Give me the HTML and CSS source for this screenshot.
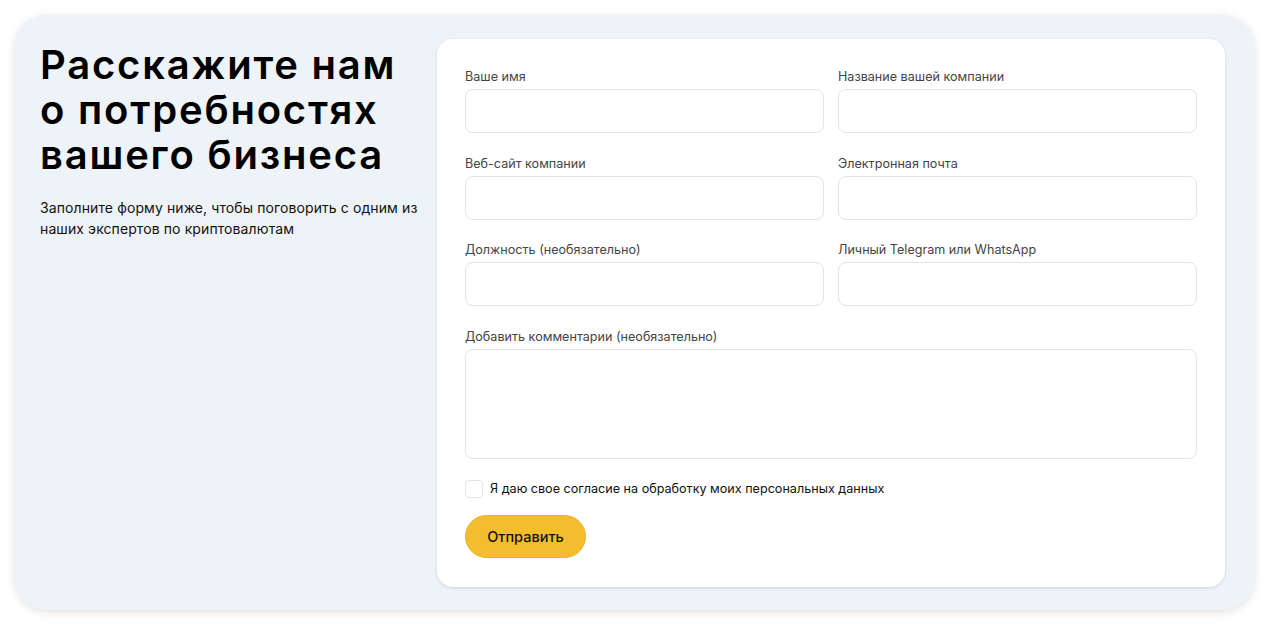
FILE: index.html
```html
<!DOCTYPE html>
<html lang="ru">
<head>
    <meta charset="UTF-8">
    <title>Связаться с нами</title>
    <link rel="stylesheet" href="styles.css">
</head>
<body>
    <section class="contact">
        <div class="contact-intro">
            <h1 class="contact-title">Расскажите нам о&nbsp;потребностях вашего бизнеса</h1>
            <p class="contact-text">Заполните форму ниже, чтобы поговорить с одним из наших экспертов по криптовалютам</p>
        </div>

        <form class="contact-card">
            <div class="form-grid">
                <label class="field">
                    <span class="field-label">Ваше имя</span>
                    <input type="text" class="field-input">
                </label>
                <label class="field">
                    <span class="field-label">Название вашей компании</span>
                    <input type="text" class="field-input">
                </label>
                <label class="field">
                    <span class="field-label">Веб-сайт компании</span>
                    <input type="text" class="field-input">
                </label>
                <label class="field">
                    <span class="field-label">Электронная почта</span>
                    <input type="email" class="field-input">
                </label>
                <label class="field">
                    <span class="field-label">Должность (необязательно)</span>
                    <input type="text" class="field-input">
                </label>
                <label class="field">
                    <span class="field-label">Личный Telegram или WhatsApp</span>
                    <input type="text" class="field-input">
                </label>
                <label class="field field-wide">
                    <span class="field-label">Добавить комментарии (необязательно)</span>
                    <textarea class="field-input field-area"></textarea>
                </label>
            </div>

            <label class="agree">
                <input type="checkbox" class="agree-box">
                <span>Я даю свое согласие на обработку моих персональных данных</span>
            </label>

            <button type="button" class="submit">Отправить</button>
        </form>
    </section>
</body>
</html>
```

FILE: styles.css
```css
* {
    margin: 0;
    padding: 0;
    box-sizing: border-box;
}
body {
    background: #fff;
    padding: 15px;
    font-family: Inter, "Noto Sans", sans-serif;
    color: #111;
}
.contact {
    width: 1239px;
    height: 595px;
    background: #eef3f8;
    border-radius: 32px;
    box-shadow: 0 2px 10px rgba(0, 0, 0, 0.12);
    padding: 24px 29px 23px 25px;
    display: flex;
    gap: 7px;
}
.contact-intro {
    width: 390px;
    flex-shrink: 0;
}
.contact-title {
    font-size: 40px;
    font-weight: 600;
    line-height: 45px;
    letter-spacing: 1.8px;
    color: #000;
    margin-top: 3px;
}
.contact-text {
    margin-top: 20px;
    font-size: 14px;
    line-height: 21px;
    letter-spacing: 0.1px;
    color: #111;
}
/* карточка с формой */
.contact-card {
    flex: 1;
    background: #fff;
    border-radius: 16px;
    box-shadow: 0 1px 3px rgba(40, 60, 90, 0.18);
    padding: 30px 28px 29px 28px;
}
.form-grid {
    display: grid;
    grid-template-columns: 1fr 1fr;
    column-gap: 14px;
    row-gap: 22.5px;
}
.field {
    display: flex;
    flex-direction: column;
    gap: 4px;
}
.field-wide {
    grid-column: 1 / 3;
}
.field-label {
    font-size: 12.6px;
    line-height: 16px;
    color: #444;
}
.field-input {
    height: 44px;
    border: 1px solid #e2e4e7;
    border-radius: 8px;
    background: #fff;
    font-family: inherit;
    font-size: 14px;
    padding: 0 12px;
    outline: none;
}
.field-area {
    height: 110px;
    resize: none;
    padding: 10px 12px;
}
.agree {
    display: flex;
    align-items: center;
    gap: 7px;
    margin-top: 21px;
    font-size: 12.6px;
    color: #111;
}
.agree-box {
    appearance: none;
    width: 18px;
    height: 18px;
    border: 1px solid #e2e4e7;
    border-radius: 4px;
    background: #fff;
}
.submit {
    margin-top: 17px;
    width: 121px;
    height: 43px;
    border-radius: 22px;
    border: 1px solid #edb51c;
    background: #f3bd2d;
    font-family: inherit;
    font-size: 14.5px;
    font-weight: 500;
    color: #111;
    cursor: pointer;
}
```
